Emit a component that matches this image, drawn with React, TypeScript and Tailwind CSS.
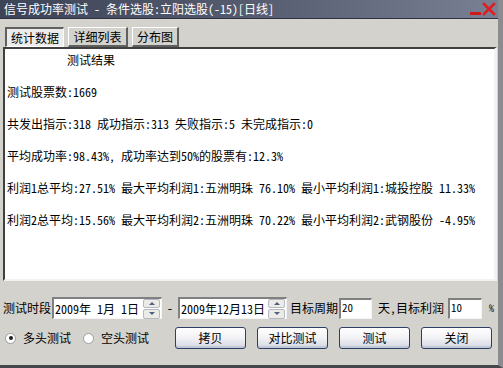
import React from "react";

const font = {
  fontFamily: '"Noto Sans Mono CJK SC", "Noto Sans CJK SC", sans-serif',
};

function Spinner() {
  return (
    <div className="flex flex-col w-[17px] h-[20px] gap-[1px]">
      <div className="flex-1 flex items-center justify-center bg-[#ecebe6] border border-[#b4b8c4] rounded-[2px]">
        <div className="w-0 h-0 border-l-[3px] border-r-[3px] border-b-[3px] border-l-transparent border-r-transparent border-b-[#4d6185]" />
      </div>
      <div className="flex-1 flex items-center justify-center bg-[#ecebe6] border border-[#b4b8c4] rounded-[2px]">
        <div className="w-0 h-0 border-l-[3px] border-r-[3px] border-t-[3px] border-l-transparent border-r-transparent border-t-[#4d6185]" />
      </div>
    </div>
  );
}

function DateBox({ value, width }: { value: string; width: string }) {
  return (
    <div
      className={`flex items-center justify-between h-[22px] bg-white border-t-2 border-l-2 border-[#808080] border-r border-b border-r-[#f4f4f4] border-b-[#f4f4f4] pr-[1px] ${width}`}
    >
      <span className="pl-[1px] text-[12px] whitespace-pre leading-none">{value}</span>
      <Spinner />
    </div>
  );
}

function Button({ label, width }: { label: string; width: string }) {
  return (
    <button
      className={`h-[22px] ${width} rounded-[3px] border border-[#2f3e66] bg-gradient-to-b from-white via-[#f2f2f6] to-[#d3d6e2] text-[12px] leading-none text-black shadow-[inset_0_-2px_0_#c4c9d8]`}
    >
      {label}
    </button>
  );
}

function Tab({ label, active, width }: { label: string; active?: boolean; width: string }) {
  return (
    <div
      className={`h-[20px] ${width} flex items-center justify-center text-[12px] leading-none ${
        active
          ? "bg-[#ececec] border-t-2 border-l-2 border-[#606060] border-r border-b border-r-white border-b-white"
          : "bg-[#d4d2cc] border-t border-l border-white border-r-2 border-b-2 border-r-[#606060] border-b-[#606060]"
      }`}
    >
      {label}
    </div>
  );
}

function Radio({ checked, label }: { checked?: boolean; label: string }) {
  return (
    <div className="flex items-center gap-[7px]">
      <div className="w-[11px] h-[11px] rounded-full bg-white border border-[#9c9c9c] flex items-center justify-center">
        {checked && <div className="w-[4px] h-[4px] rounded-full bg-[#202020]" />}
      </div>
      <span className="text-[12px] leading-none">{label}</span>
    </div>
  );
}

export default function App() {
  const lines = [
    "测试股票数:1669",
    "共发出指示:318 成功指示:313 失败指示:5 未完成指示:0",
    "平均成功率:98.43%, 成功率达到50%的股票有:12.3%",
    "利润1总平均:27.51% 最大平均利润1:五洲明珠 76.10% 最小平均利润1:城投控股 11.33%",
    "利润2总平均:15.56% 最大平均利润2:五洲明珠 70.22% 最小平均利润2:武钢股份 -4.95%",
  ];

  return (
    <div
      className="w-[503px] h-[368px] flex flex-col bg-[#d4d2cc] text-black border-r-[5px] border-b-[3px] border-r-[#8c8c90] border-b-[#46474c] overflow-hidden"
      style={font}
    >
      {/* title bar */}
      <div className="h-[19px] shrink-0 flex items-center justify-between bg-gradient-to-r from-[#3d4458] via-[#555c70] to-[#7a8093] border-b border-[#2e3240]">
        <span className="pl-[4px] text-[12px] leading-none text-white whitespace-pre">
          信号成功率测试 - 条件选股:立阳选股(-15)[日线]
        </span>
        <div className="flex items-center gap-[1px] pr-[2px]">
          <div className="w-[11px] h-[12px] flex items-end">
            <div className="w-[11px] h-[3px] bg-[#d01818]" />
          </div>
          <svg width="14" height="14" viewBox="0 0 14 14">
            <path d="M2 2 L12 12 M12 2 L2 12" stroke="#e01c1c" strokeWidth="2.6" strokeLinecap="square" />
          </svg>
        </div>
      </div>

      {/* tabs */}
      <div className="flex gap-[4px] pl-[5px] pt-[8px] h-[28px] shrink-0 items-start">
        <Tab label="统计数据" active width="w-[59px]" />
        <Tab label="详细列表" width="w-[60px]" />
        <Tab label="分布图" width="w-[47px]" />
      </div>

      {/* content */}
      <div className="ml-[3px] mr-[1px] h-[234px] shrink-0 bg-white border-t-2 border-l-2 border-[#404040] border-r-[3px] border-b-[2px] border-r-[#f2f2f2] border-b-[#f2f2f2]">
        <div className="pl-[2px] pt-[3px] text-[12px] leading-none whitespace-pre">
          <div className="h-[15px] pl-[60px] flex items-center">测试结果</div>
          {lines.map((t) => (
            <div key={t} className="h-[32px] pt-[17px] flex items-center">
              {t}
            </div>
          ))}
        </div>
      </div>

      {/* controls */}
      <div className="flex items-center pl-[3px] mt-[16px] text-[12px] leading-none whitespace-pre">
        <span className="w-[49px]">测试时段</span>
        <DateBox value="2009年 1月 1日" width="w-[110px]" />
        <span className="w-[16px] text-center">-</span>
        <DateBox value="2009年12月13日" width="w-[109px]" />
        <span className="pl-[3px] w-[52px]">目标周期</span>
        <div className="w-[33px] h-[21px] bg-white border-t-2 border-l-2 border-[#808080] border-r border-b border-r-[#f4f4f4] border-b-[#f4f4f4] pl-[1px] pt-[2px] text-[11px]">
          20
        </div>
        <span className="pl-[6px] w-[76px]">天,目标利润</span>
        <div className="w-[34px] h-[21px] bg-white border-t-2 border-l-2 border-[#808080] border-r border-b border-r-[#f4f4f4] border-b-[#f4f4f4] pl-[1px] pt-[2px] text-[11px]">
          10
        </div>
        <span className="pl-[7px] text-[10px]">%</span>
      </div>

      <div className="flex items-center pl-[5px] mt-[8px]">
        <div className="flex gap-[12px] w-[170px]">
          <Radio checked label="多头测试" />
          <Radio label="空头测试" />
        </div>
        <div className="flex gap-[11px]">
          <Button label="拷贝" width="w-[71px]" />
          <Button label="对比测试" width="w-[71px]" />
          <Button label="测试" width="w-[71px]" />
          <Button label="关闭" width="w-[71px]" />
        </div>
      </div>
    </div>
  );
}
